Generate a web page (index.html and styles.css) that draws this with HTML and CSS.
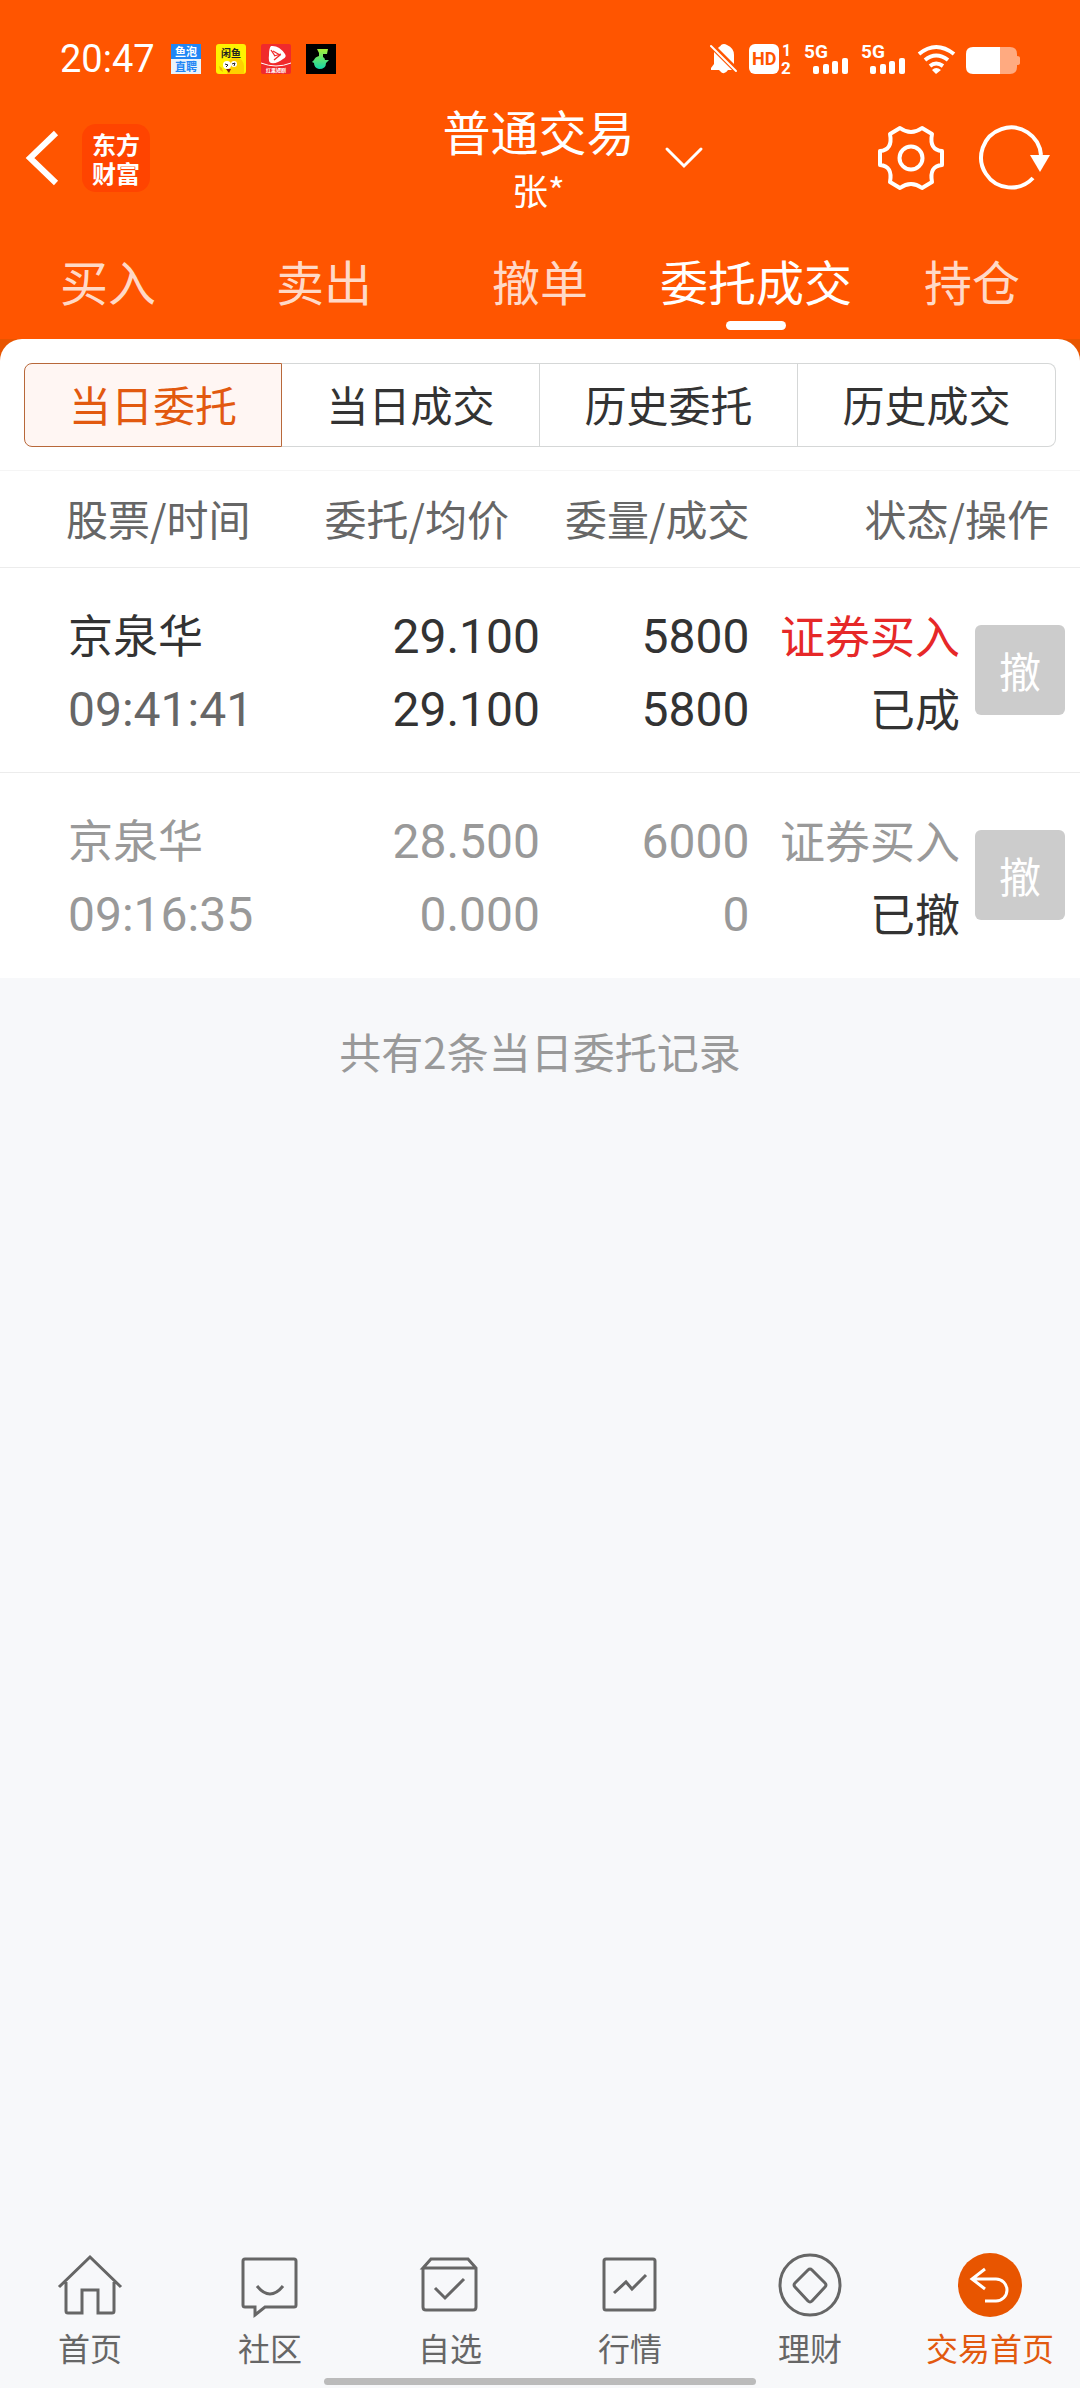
FILE: index.html
```
<!DOCTYPE html>
<html lang="zh-CN">
<head>
  <meta charset="UTF-8">
  <meta name="viewport" content="width=device-width, initial-scale=1.0">
  <title>普通交易</title>
  <link rel="stylesheet" href="styles.css">
</head>
<body>

  <header class="header">
    <!-- phone status bar -->
    <div class="status">
      <span class="clock">20:47</span>
      <div class="apps">
        <svg width="30" height="30" viewBox="0 0 30 30">
          <rect width="30" height="30" fill="#e9f2fb"/>
          <rect width="30" height="15" fill="#2186f5"/>
          <text class="tiny" x="15" y="12" font-size="11" fill="#fff">鱼泡</text>
          <text class="tiny" x="15" y="27" font-size="11" fill="#2186f5">直聘</text>
        </svg>
        <svg width="30" height="30" viewBox="0 0 30 30">
          <rect width="30" height="30" rx="3" fill="#fff200"/>
          <path d="M11 30V21Q12 14 19 14Q27 13 28 22V30Z" fill="#ffd000"/>
          <path d="M3 22l3 2 1 4-3-2z" fill="#f5b800"/>
          <circle cx="11" cy="21" r="4" fill="#fff"/>
          <circle cx="18" cy="20" r="3" fill="#fff"/>
          <path d="M9 20l3 1-2 2M16 20l3-1-1 3" fill="none" stroke="#222" stroke-width="1"/>
          <path d="M10 25h5l-2 4z" fill="#7d1a10"/>
          <text class="tiny" x="15" y="13" font-size="10" fill="#222">闲鱼</text>
        </svg>
        <svg width="30" height="30" viewBox="0 0 30 30">
          <rect width="30" height="30" rx="2" fill="#f02a2c"/>
          <path d="M10 2Q18 1 24 10Q26 13 22 15Q16 20 10 19Q7 18 8 11Q8 4 10 2Z" fill="#fff"/>
          <path d="M12 7l7 4-6 5M10 6l4 6M20 10l-7 2" fill="none" stroke="#f02a2c" stroke-width="1.3"/>
          <path d="M0 19Q15 25 30 19" fill="none" stroke="#fff" stroke-width="1"/>
          <text class="tiny" x="15" y="28" font-size="5" fill="#fff">红果短剧</text>
        </svg>
        <svg width="30" height="30" viewBox="0 0 30 30">
          <defs>
            <linearGradient id="note" x1="0" y1="0" x2="0" y2="1">
              <stop offset="0" stop-color="#a6f03a"/>
              <stop offset="1" stop-color="#12d6a8"/>
            </linearGradient>
          </defs>
          <rect width="30" height="30" fill="#000"/>
          <path d="M11 5H22L21 10H17V13Q19 14 19 16L23 16L20 19Q20 25 13 25Q8 24 8 19L6 18L8 16Q9 13 13 12V9Z" fill="url(#note)"/>
        </svg>
      </div>
      <div class="signals">
        <svg width="28" height="30" viewBox="0 0 28 30" fill="#fff">
          <path d="M9 3Q11 2 11 1Q14-1 17 1Q24 4 24 11V20L8 4ZM4 8L22 26H18Q14 32 10 27L9 26H1V24L4 20Z"/>
          <path d="M1 2L26 27" stroke="#fff" stroke-width="2" stroke-linecap="round"/>
        </svg>
        <svg width="44" height="30" viewBox="0 0 44 30">
          <rect width="30" height="30" rx="6" fill="#fff"/>
          <text class="net" x="3" y="21" font-size="18" fill="#ff5500">HD</text>
          <text class="net" x="33" y="12" font-size="16" fill="#fff">1</text>
          <text class="net" x="32" y="30" font-size="17" fill="#fff">2</text>
        </svg>
        <svg width="46" height="30" viewBox="0 0 46 30" fill="#fff">
          <text class="net" x="0" y="14" font-size="19">5G</text>
          <rect x="9" y="22" width="6" height="8" rx="2"/>
          <rect x="19" y="20" width="6" height="10" rx="2"/>
          <rect x="28" y="17" width="6" height="13" rx="2"/>
          <rect x="38" y="14" width="6" height="16" rx="2"/>
        </svg>
        <svg width="46" height="30" viewBox="0 0 46 30" fill="#fff">
          <text class="net" x="0" y="14" font-size="19">5G</text>
          <rect x="9" y="22" width="6" height="8" rx="2"/>
          <rect x="19" y="20" width="6" height="10" rx="2"/>
          <rect x="28" y="17" width="6" height="13" rx="2"/>
          <rect x="38" y="14" width="6" height="16" rx="2"/>
        </svg>
        <svg width="37" height="30" viewBox="0 0 37 30" fill="none" stroke="#fff" stroke-width="4">
          <path d="M1 10Q18 -4 36 10"/>
          <path d="M7 16Q18 7 30 16"/>
          <path d="M12 22Q18 17 25 22"/>
          <path d="M14 26Q18 22 23 26L18 30Z" fill="#fff" stroke="none"/>
        </svg>
        <svg width="54" height="30" viewBox="0 0 54 30">
          <path d="M34 3H44Q51 3 51 10V12Q54 12 54 14V19Q54 21 51 21V23Q51 30 44 30H34Z" fill="#ffaa80"/>
          <path d="M34 3H7Q0 3 0 10V23Q0 30 7 30H34Z" fill="#fff"/>
        </svg>
      </div>
    </div>

    <div class="titlebar">
      <div class="left">
        <button class="icon-btn" aria-label="返回">
          <svg width="32" height="56" viewBox="0 0 32 56" fill="none" stroke="#fff" stroke-width="6">
            <path d="M30 3L4 28L30 53"/>
          </svg>
        </button>
        <a class="logo" href="#">东方<br>财富</a>
      </div>
      <div class="title">
        <h1>普通交易</h1>
        <p>张*</p>
      </div>
      <div class="right">
        <button class="icon-btn" aria-label="切换账户">
          <svg width="38" height="22" viewBox="0 0 38 22" fill="none" stroke="#fff" stroke-width="3" stroke-linecap="round">
            <path d="M2 2L19 19L36 2"/>
          </svg>
        </button>
        <button class="icon-btn settings" aria-label="设置">
          <svg width="66" height="64" viewBox="0 0 66 64" fill="none" stroke="#fff" stroke-width="4" stroke-linejoin="round">
            <path d="M22 2Q33 10 44 2L54 8Q51 24 64 25V39Q51 40 54 56L44 62Q33 54 22 62L12 56Q15 40 2 39V25Q15 24 12 8Z"/>
            <circle cx="33" cy="32" r="11.5"/>
          </svg>
        </button>
        <button class="icon-btn" aria-label="刷新">
          <svg width="72" height="64" viewBox="0 0 72 64" fill="none" stroke="#fff" stroke-width="4">
            <path d="M62 29A30 30 0 1 0 54 52"/>
            <path d="M51 29H71L61 46Z" fill="#fff" stroke="none"/>
          </svg>
        </button>
      </div>
    </div>

    <nav class="tabs">
      <a href="#">买入</a>
      <a href="#">卖出</a>
      <a href="#">撤单</a>
      <a href="#" class="active">委托成交</a>
      <a href="#">持仓</a>
    </nav>
  </header>

  <main class="main">
    <div class="sheet-wrap">
      <section class="sheet">
        <div class="segment">
          <button class="active">当日委托</button>
          <button>当日成交</button>
          <button>历史委托</button>
          <button>历史成交</button>
        </div>

        <table class="orders">
          <colgroup>
            <col class="c-name">
            <col class="c-price">
            <col class="c-qty">
            <col>
            <col class="c-action">
          </colgroup>
          <thead>
            <tr>
              <th class="name">股票/时间</th>
              <th class="price">委托/均价</th>
              <th>委量/成交</th>
              <th class="state" colspan="2">状态/操作</th>
            </tr>
          </thead>
          <tbody>
            <tr>
              <td class="name">京泉华<br><span class="num time">09:41:41</span></td>
              <td class="num">29.100<br>29.100</td>
              <td class="num">5800<br>5800</td>
              <td><span class="buy">证券买入</span><br>已成</td>
              <td class="action"><button class="cancel" disabled>撤</button></td>
            </tr>
            <tr class="cancelled">
              <td class="name">京泉华<br><span class="num">09:16:35</span></td>
              <td class="num">28.500<br>0.000</td>
              <td class="num">6000<br>0</td>
              <td>证券买入<br><span class="result">已撤</span></td>
              <td class="action"><button class="cancel" disabled>撤</button></td>
            </tr>
          </tbody>
        </table>
      </section>
    </div>
    <p class="total">共有2条当日委托记录</p>
  </main>

  <footer class="footer">
    <nav class="bottom-nav">
      <a href="#">
        <svg viewBox="0 0 64 64">
          <path d="M1 34L32 4L63 34M8 29V58Q8 60 10 60H24V37H40V60H54Q56 60 56 58V29"/>
        </svg>
        首页
      </a>
      <a href="#">
        <svg viewBox="0 0 64 64">
          <path d="M7 6H56Q58 6 58 8V52Q58 54 56 54H27L17 62V54H7Q5 54 5 52V8Q5 6 7 6Z"/>
          <path d="M19 33Q32 49 45 33"/>
        </svg>
        社区
      </a>
      <a href="#">
        <svg viewBox="0 0 64 64">
          <path d="M5 15V54Q5 57 8 57H55Q58 57 58 54V15L50 6H13L5 15H58"/>
          <path d="M17 35L27 45L46 26"/>
        </svg>
        自选
      </a>
      <a href="#">
        <svg viewBox="0 0 64 64">
          <rect x="6" y="6" width="51" height="51" rx="2"/>
          <path d="M16 40L28 29L34 36L48 22"/>
        </svg>
        行情
      </a>
      <a href="#">
        <svg viewBox="0 0 64 64">
          <circle cx="32" cy="32" r="30"/>
          <path d="M30 17Q32 15 34 17L47 30Q49 32 47 34L34 48Q32 50 30 48L17 34Q15 32 17 30Z"/>
        </svg>
        理财
      </a>
      <a href="#" class="active">
        <svg viewBox="0 0 64 64">
          <circle cx="32" cy="32" r="32"/>
          <path d="M27 16L14 26L27 36M14 26H38A11 11 0 0 1 38 48H27"/>
        </svg>
        交易首页
      </a>
    </nav>
    <div class="home-bar"></div>
  </footer>

</body>
</html>
```
FILE: styles.css
```
* {
  box-sizing: border-box;
}

body {
  margin: 0;
  min-height: 100vh;
  display: flex;
  flex-direction: column;
  background: #f7f8fa;
  color: #333;
  font-family: "Noto Sans CJK SC", sans-serif;
  font-size: 42px;
}

h1, p {
  margin: 0;
  font-weight: 400;
}

a {
  color: inherit;
  text-decoration: none;
}

button {
  font: inherit;
  color: inherit;
  background: none;
  border: none;
  padding: 0;
}

svg {
  display: block;
  overflow: visible;
}

.header {
  background: #ff5500;
  color: #fff;
}

/* status bar */
.status {
  display: flex;
  align-items: center;
  padding: 44px 60px 0;
}

.clock {
  font-family: Roboto, sans-serif;
  font-size: 38px;
  line-height: 30px;
}

.apps {
  display: flex;
  gap: 15px;
  margin-left: 16px;
}

.signals {
  display: flex;
  gap: 11px;
  margin-left: auto;
}

.tiny {
  font-family: "Noto Sans CJK SC", sans-serif;
  font-weight: 700;
  text-anchor: middle;
}

.net {
  font-family: Roboto, sans-serif;
  font-weight: 700;
}

/* title */
.titlebar {
  display: grid;
  grid-template-columns: 1fr auto 1fr;
  align-items: center;
  padding: 23px 29px 0 26px;
}

.left,
.right {
  display: flex;
  align-items: center;
}

.logo {
  width: 68px;
  height: 68px;
  margin-left: 24px;
  padding-top: 5px;
  border-radius: 14px;
  background: #ff4400;
  font-size: 24px;
  font-weight: 700;
  line-height: 29px;
  text-align: center;
}

.title {
  padding-bottom: 3px;
  text-align: center;
}

.title h1 {
  font-size: 48px;
  line-height: 66px;
}

.title p {
  font-size: 36px;
  line-height: 52px;
}

.right .icon-btn:first-child {
  margin-left: 30px;
}

.settings {
  margin-left: auto;
  margin-right: 35px;
}

.tabs {
  display: grid;
  grid-template-columns: repeat(5, 1fr);
  padding: 32px 0 9px;
}

.tabs a {
  font-size: 48px;
  line-height: 60px;
  text-align: center;
  white-space: nowrap;
  color: #ffd9c7;
}

.tabs a::after {
  content: "";
  display: block;
  width: 60px;
  height: 9px;
  margin: 11px auto 0;
  border-radius: 5px;
}

.tabs .active {
  color: #fff;
}

.tabs .active::after {
  background: #fff;
}

/* order list */
.main {
  flex: 1;
}

.sheet-wrap {
  background: #e85500;
}

.sheet {
  background: #fff;
  border-radius: 22px 22px 0 0;
}

.segment {
  display: grid;
  grid-template-columns: repeat(4, 1fr);
  padding: 24px 24px 23px;
}

.segment button {
  height: 84px;
  padding-bottom: 3px;
  border: 1px solid #d5d7d7;
  border-left-width: 0;
}

.segment button:last-child {
  border-radius: 0 8px 8px 0;
}

.segment .active {
  border: 1px solid #b8683a;
  border-radius: 8px 0 0 8px;
  background: #fff6f3;
  color: #e2590f;
}

.orders {
  width: 100%;
  table-layout: fixed;
  border-collapse: collapse;
}

.c-name,
.c-price {
  width: 25%;
}

.c-qty {
  width: 19.4%;
}

.c-action {
  width: 120px;
}

.orders th {
  height: 97px;
  padding: 0 0 4px;
  border-top: 1px solid #f5f5f5;
  border-bottom: 1px solid #ececec;
  color: #666;
  font-weight: 400;
  text-align: right;
  white-space: nowrap;
}

.orders td {
  height: 205px;
  padding: 2px 0 0;
  border-bottom: 1px solid #ececec;
  font-size: 45px;
  line-height: 73px;
  text-align: right;
  white-space: nowrap;
}

.orders tr:last-child td {
  border-bottom: none;
}

.orders .name {
  padding-left: 68px;
  text-align: left;
}

.orders th.name {
  padding-left: 66px;
}

.orders .price,
.orders .state {
  padding-right: 31px;
}

.orders .num {
  font-family: Roboto, sans-serif;
  font-size: 48px;
}

.orders td.num {
  padding-top: 6px;
}

.time {
  color: #666;
}

.buy {
  color: #e62828;
}

.orders .cancelled {
  color: #999;
}

.result {
  color: #333;
}

.orders .action {
  padding: 0 15px 0 0;
}

.cancel {
  display: block;
  width: 90px;
  height: 90px;
  margin-left: auto;
  border-radius: 6px;
  background: #ccc;
  color: #fff;
  font-size: 42px;
  line-height: 90px;
}

.total {
  padding-top: 43px;
  line-height: 60px;
  text-align: center;
  color: #999;
}

/* bottom navigation */
.footer {
  padding-bottom: 3px;
}

.bottom-nav {
  display: grid;
  grid-template-columns: repeat(6, 1fr);
}

.bottom-nav a {
  display: flex;
  flex-direction: column;
  align-items: center;
  gap: 10px;
  color: #666;
  font-size: 32px;
  line-height: 40px;
}

.bottom-nav svg {
  width: 64px;
  height: 64px;
  fill: none;
  stroke: #666;
  stroke-width: 3;
}

.bottom-nav .active {
  color: #e2590f;
}

.bottom-nav .active svg {
  stroke: #fff;
}

.bottom-nav .active circle {
  fill: #e85500;
  stroke: none;
}

.home-bar {
  width: 40%;
  height: 7px;
  margin: 11px auto 0;
  border-radius: 4px;
  background: #bbb;
}
```
